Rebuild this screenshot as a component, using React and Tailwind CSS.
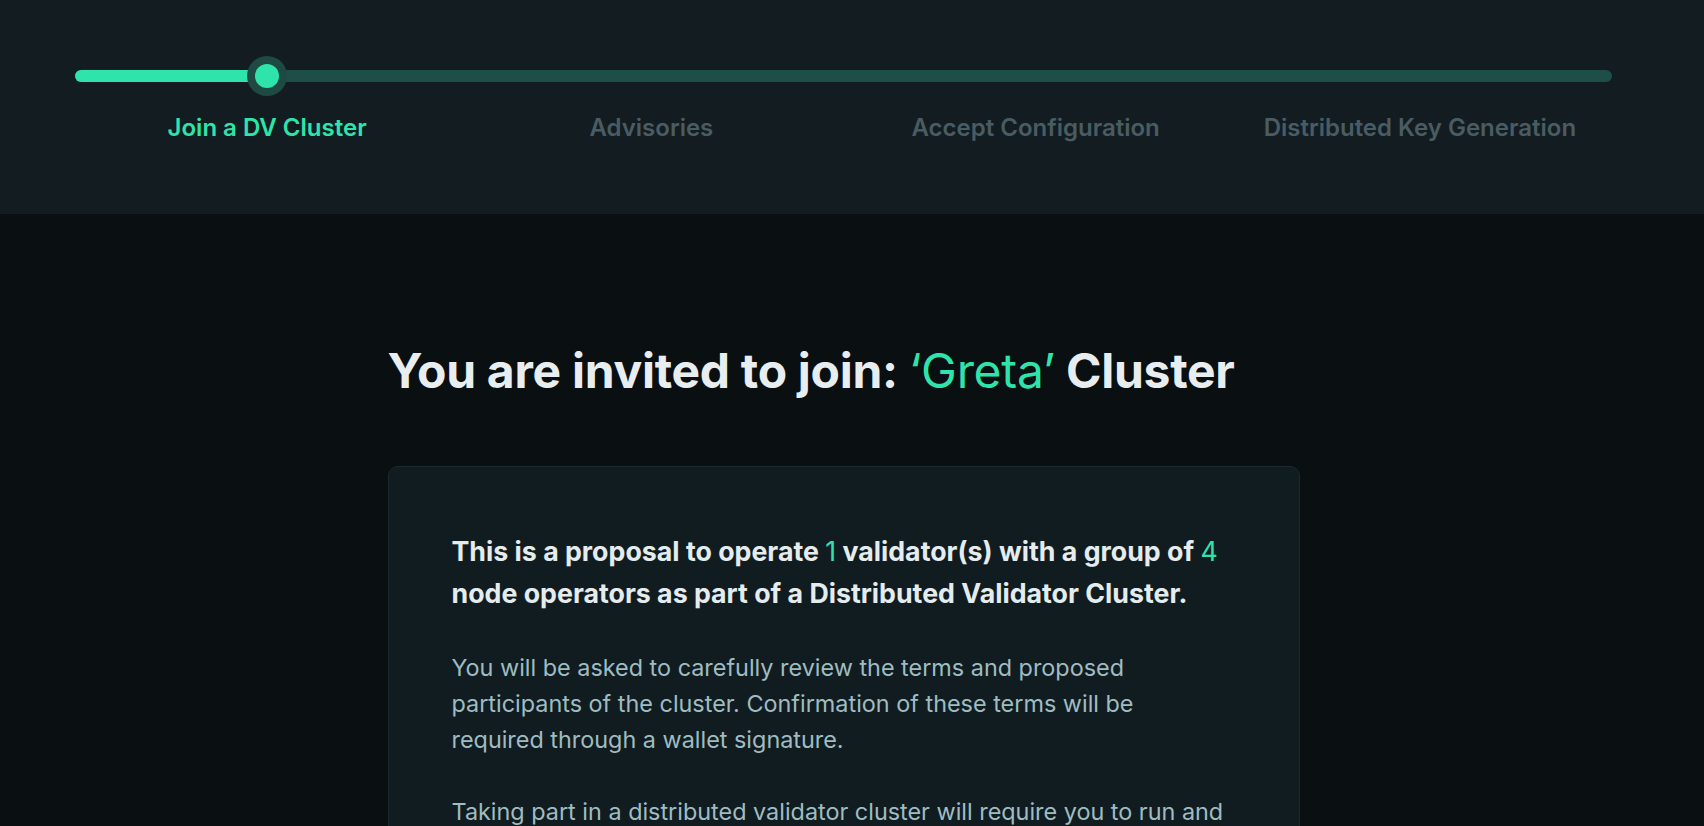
import React from 'react'

// ── Stepper steps ────────────────────────────────────────────────────────────
const STEPS = [
  'Join a DV Cluster',
  'Advisories',
  'Accept Configuration',
  'Distributed Key Generation',
]

const FONT = { fontFamily: 'Inter, "Noto Sans", "Liberation Sans", sans-serif' }

function Stepper({ active = 0 }) {
  return (
    <div className="px-[75px]">
      {/* Track + knob */}
      <div className="relative h-10 flex items-center">
        <div className="w-full h-3 rounded-full bg-[#1f4d47]" />
        <div className="absolute left-0 h-3 w-[12.5%] rounded-l-full bg-[#2fe4ab]" />
        <div className="absolute left-[12.5%] -translate-x-1/2 w-10 h-10 rounded-full bg-[#1f4a44] flex items-center justify-center">
          <div className="w-6 h-6 rounded-full bg-[#2fe4ab]" />
        </div>
      </div>

      {/* Labels */}
      <div className="grid grid-cols-4 mt-[18px]">
        {STEPS.map((label, i) => (
          <p
            key={label}
            className={
              'text-center text-[24px] leading-7 font-semibold ' +
              (i === active ? 'text-[#2fe4ab]' : 'text-[#4a5c63]')
            }
          >
            {label}
          </p>
        ))}
      </div>
    </div>
  )
}

export default function App() {
  return (
    <div className="min-h-screen bg-[#0a0f12]" style={FONT}>
      {/* ── Header with progress ── */}
      <header className="bg-[#121c21] pt-[56px] pb-[72px]">
        <div className="pr-[17px]">
          <Stepper active={0} />
        </div>
      </header>

      {/* ── Invitation body ── */}
      <main className="pr-[17px]">
        <div className="mx-auto w-[912px] pt-[129px] pb-20">
          <h1 className="text-[48px] leading-[56px] font-bold text-[#e8eef0] tracking-[-0.006em]">
            You are invited to join: <span className="font-normal text-[#2fe4ab]">‘Greta’</span> Cluster
          </h1>

          <div className="mt-[67px] rounded-[10px] border border-[#1b2a30] bg-[#111c21] p-[63px]">
            <p className="text-[26.75px] leading-[42px] font-bold text-[#e4ecee]">
              This is a proposal to operate <span className="font-normal text-[#2fe4ab]">1</span> validator(s) with a group of{' '}
              <span className="font-normal text-[#2fe4ab]">4</span>
              <br />
              node operators as part of a Distributed Validator Cluster.
            </p>

            <p className="mt-[36px] text-[23.4px] leading-9 text-[#9fbcc1]">
              You will be asked to carefully review the terms and proposed
              <br />
              participants of the cluster. Confirmation of these terms will be
              <br />
              required through a wallet signature.
            </p>

            <p className="mt-9 text-[23.4px] leading-9 text-[#9fbcc1]">
              Taking part in a distributed validator cluster will require you to run and
              <br />
              maintain a distributed validator client alongside your consensus and
              <br />
              execution clients.
            </p>
          </div>
        </div>
      </main>
    </div>
  )
}
